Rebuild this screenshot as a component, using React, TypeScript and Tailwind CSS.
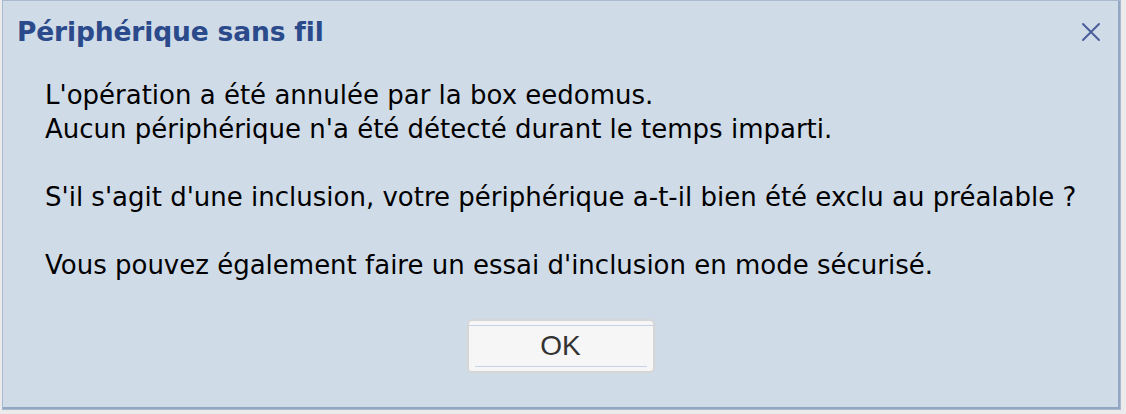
import React from "react";

export default function App() {
  const font = { fontFamily: '"DejaVu Sans", Tahoma, sans-serif' };
  return (
    <div className="w-[1126px] h-[414px] bg-[#ebebeb] pl-[2px] pr-[5px] pb-[4px]">
      <div
        className="h-full bg-[#d0dbe8] border border-[#a9b9d0] shadow-[inset_-2px_-2px_0_#93a6c2] flex flex-col"
        style={font}
      >
        <div className="flex items-center justify-between h-[62px] pl-[14px] pr-[18px]">
          <span className="text-[26.5px] font-bold text-[#2b4a8b] tracking-[-0.15px]">Périphérique sans fil</span>
          <svg width="22" height="22" viewBox="0 0 22 22">
            <path d="M3 3 L19 19 M19 3 L3 19" stroke="#4b5e9a" strokeWidth="2" strokeLinecap="round" />
          </svg>
        </div>
        <div className="pl-[42px] text-[26px] leading-[34px] text-black mt-[15px]">
          <div>L'opération a été annulée par la box eedomus.</div>
          <div>Aucun périphérique n'a été détecté durant le temps imparti.</div>
          <div className="h-[34px]" />
          <div>S'il s'agit d'une inclusion, votre périphérique a-t-il bien été exclu au préalable ?</div>
          <div className="h-[34px]" />
          <div>Vous pouvez également faire un essai d'inclusion en mode sécurisé.</div>
        </div>
        <div className="flex justify-center mt-[37px] pr-[2px]">
          <button
            className="relative w-[188px] h-[54px] rounded-[5px] bg-[#f6f6f6] border-2 border-[#d6d6d6] text-[28px] text-[#333333] flex items-center justify-center"
            style={{ fontFamily: '"Liberation Sans", Arial, sans-serif' }}
          >
            <span className="absolute left-0 right-0 top-[4px] h-px bg-[#c5d3e8]" />
            <span className="absolute left-[6px] right-[6px] bottom-[4px] h-px bg-[#c5d3e8]" />
            OK
          </button>
        </div>
      </div>
    </div>
  );
}
